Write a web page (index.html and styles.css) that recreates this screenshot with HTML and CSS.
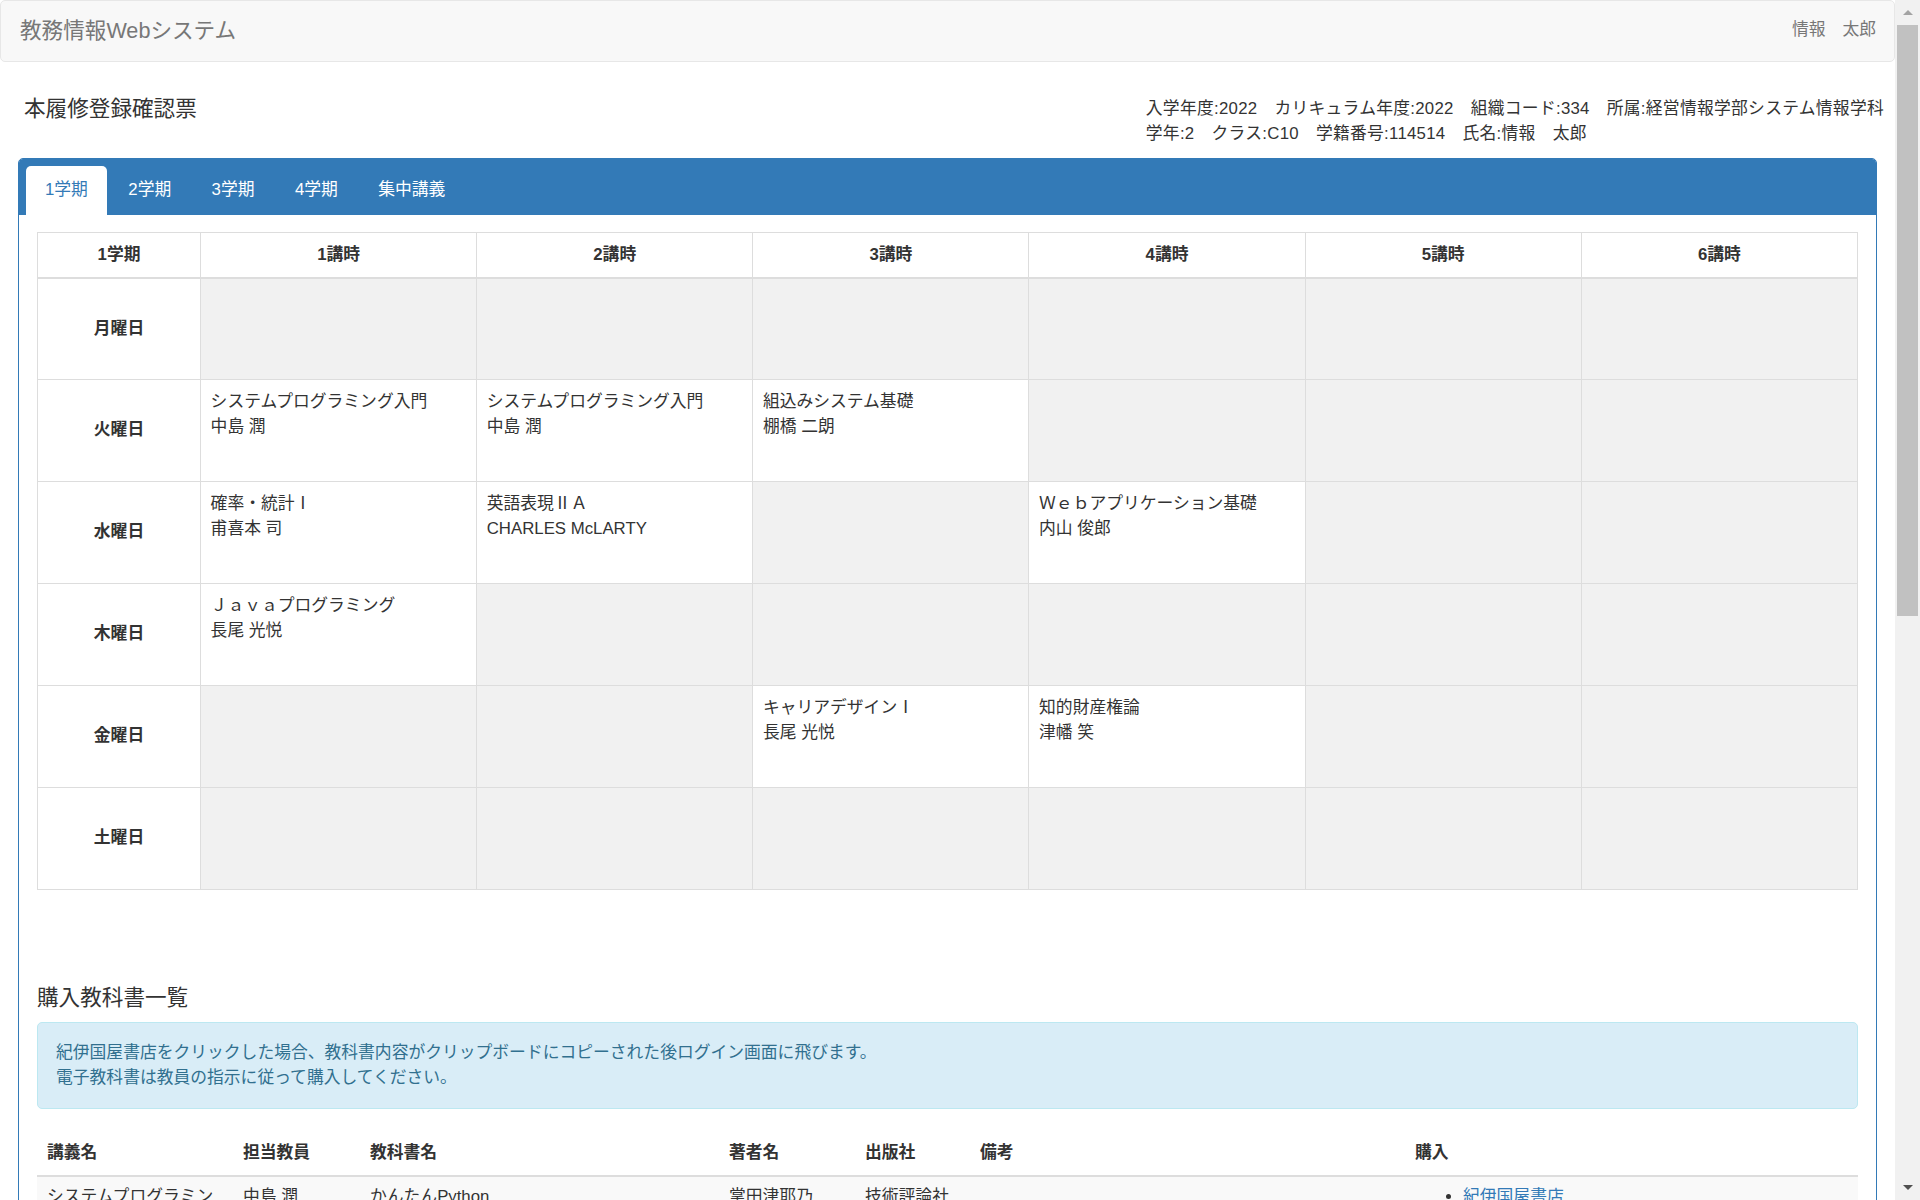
FILE: index.html
```html
<!DOCTYPE html>
<html lang="ja">
<head>
<meta charset="utf-8">
<title>教務情報Webシステム</title>
<link rel="stylesheet" href="styles.css">
</head>
<body>
<div class="window">
  <div class="viewport">
    <nav class="navbar">
      <span class="brand">教務情報Webシステム</span>
      <span class="user">情報　太郎</span>
    </nav>
    <div class="container">
      <div class="page-head">
        <h4 class="page-title">本履修登録確認票</h4>
        <div class="student-info">
          <div>入学年度:2022　カリキュラム年度:2022　組織コード:334　所属:経営情報学部システム情報学科</div>
          <div>学年:2　クラス:C10　学籍番号:114514　氏名:情報　太郎</div>
        </div>
      </div>

      <div class="panel">
        <div class="panel-heading">
          <ul class="tabs">
            <li class="tab active">1学期</li>
            <li class="tab">2学期</li>
            <li class="tab">3学期</li>
            <li class="tab">4学期</li>
            <li class="tab">集中講義</li>
          </ul>
        </div>
        <div class="panel-body">
          <table class="timetable">
            <colgroup>
              <col class="col-day">
              <col><col><col><col><col><col>
            </colgroup>
            <thead>
              <tr>
                <th>1学期</th><th>1講時</th><th>2講時</th><th>3講時</th><th>4講時</th><th>5講時</th><th>6講時</th>
              </tr>
            </thead>
            <tbody>
              <tr>
                <th class="day">月曜日</th>
                <td class="empty"></td><td class="empty"></td><td class="empty"></td><td class="empty"></td><td class="empty"></td><td class="empty"></td>
              </tr>
              <tr>
                <th class="day">火曜日</th>
                <td>システムプログラミング入門<br>中島 潤</td>
                <td>システムプログラミング入門<br>中島 潤</td>
                <td>組込みシステム基礎<br>棚橋 二朗</td>
                <td class="empty"></td><td class="empty"></td><td class="empty"></td>
              </tr>
              <tr>
                <th class="day">水曜日</th>
                <td>確率・統計Ⅰ<br>甫喜本 司</td>
                <td>英語表現ⅡＡ<br>CHARLES McLARTY</td>
                <td class="empty"></td>
                <td>Ｗｅｂアプリケーション基礎<br>内山 俊郎</td>
                <td class="empty"></td><td class="empty"></td>
              </tr>
              <tr>
                <th class="day">木曜日</th>
                <td>Ｊａｖａプログラミング<br>長尾 光悦</td>
                <td class="empty"></td><td class="empty"></td><td class="empty"></td><td class="empty"></td><td class="empty"></td>
              </tr>
              <tr>
                <th class="day">金曜日</th>
                <td class="empty"></td><td class="empty"></td>
                <td>キャリアデザインⅠ<br>長尾 光悦</td>
                <td>知的財産権論<br>津幡 笑</td>
                <td class="empty"></td><td class="empty"></td>
              </tr>
              <tr>
                <th class="day">土曜日</th>
                <td class="empty"></td><td class="empty"></td><td class="empty"></td><td class="empty"></td><td class="empty"></td><td class="empty"></td>
              </tr>
            </tbody>
          </table>

          <h4 class="section-title">購入教科書一覧</h4>
          <div class="alert">
            紀伊国屋書店をクリックした場合、教科書内容がクリップボードにコピーされた後ログイン画面に飛びます。<br>
            電子教科書は教員の指示に従って購入してください。
          </div>

          <table class="books">
            <colgroup>
              <col class="b1"><col class="b2"><col class="b3"><col class="b4"><col class="b5"><col class="b6"><col class="b7">
            </colgroup>
            <thead>
              <tr>
                <th>講義名</th><th>担当教員</th><th>教科書名</th><th>著者名</th><th>出版社</th><th>備考</th><th>購入</th>
              </tr>
            </thead>
            <tbody>
              <tr>
                <td>システムプログラミング入門</td><td>中島 潤</td><td>かんたんPython</td><td>掌田津耶乃</td><td>技術評論社</td><td></td>
                <td><ul class="shop"><li><a href="#">紀伊国屋書店</a></li></ul></td>
              </tr>
              <tr>
                <td>組込みシステム基礎</td><td>棚橋 二朗</td><td>組込みシステムの基礎</td><td>宇田川佳久</td><td>オーム社</td><td></td>
                <td><ul class="shop"><li><a href="#">紀伊国屋書店</a></li></ul></td>
              </tr>
              <tr>
                <td>確率・統計Ⅰ</td><td>甫喜本 司</td><td>確率統計入門</td><td>小寺平治</td><td>共立出版</td><td></td>
                <td><ul class="shop"><li><a href="#">紀伊国屋書店</a></li></ul></td>
              </tr>
            </tbody>
          </table>
        </div>
      </div>
    </div>
  </div>
  <div class="scrollbar">
    <div class="sb-btn"><span class="arrow-up"></span></div>
    <div class="sb-track"><div class="sb-thumb"></div></div>
    <div class="sb-btn"><span class="arrow-down"></span></div>
  </div>
</div>
</body>
</html>
```

FILE: styles.css
```css
html, body {
  margin: 0;
  padding: 0;
  height: 100%;
  overflow: hidden;
}

body {
  font-family: "Liberation Sans", "Noto Sans CJK JP", sans-serif;
  font-size: 16.8px;
  line-height: 24.5px;
  color: #333;
  background: #fff;
}

.window {
  display: flex;
  height: 100vh;
  overflow: hidden;
}

.viewport {
  flex: 1;
  min-width: 0;
  overflow: hidden;
}

/* navbar */
.navbar {
  box-sizing: border-box;
  height: 62px;
  display: flex;
  align-items: center;
  justify-content: space-between;
  padding: 0 18px;
  background: #f8f8f8;
  border: 1px solid #e7e7e7;
  border-radius: 5px;
  color: #777;
}

.brand {
  font-size: 21.6px;
  line-height: 25px;
  color: #777;
  margin-left: 1px;
  margin-top: -1px;
}

.user {
  font-size: 16.8px;
  color: #777;
  margin-top: -2px;
}

/* container */
.container {
  padding: 0 18px;
}

.page-head {
  display: flex;
  justify-content: space-between;
  align-items: flex-start;
  margin-top: 34px;
}

.page-title {
  margin: 0;
  padding-left: 6px;
  font-size: 21.6px;
  font-weight: normal;
  line-height: 25px;
  color: #333;
}

.student-info {
  margin-right: -7px;
  padding-top: 1px;
  line-height: 24.5px;
  letter-spacing: 0.27px;
}

/* panel */
.panel {
  margin-top: 12px;
  border: 1px solid #337ab7;
  border-radius: 5px;
  background: #fff;
}

.panel-heading {
  background: #337ab7;
  padding: 6.5px 7px 0;
  border-radius: 4px 4px 0 0;
}

.tabs {
  list-style: none;
  margin: 0;
  padding: 0;
  display: flex;
  gap: 2.4px;
}

.tab {
  padding: 11px 19px 13px;
  line-height: 25px;
  color: #fff;
  border-radius: 5px 5px 0 0;
}

.tab.active {
  background: #fff;
  color: #337ab7;
}

.panel-body {
  padding: 17.5px 18px;
}

/* timetable */
.timetable {
  width: 100%;
  table-layout: fixed;
  border-collapse: collapse;
}

.timetable .col-day {
  width: 163px;
}

.timetable th,
.timetable td {
  border: 1px solid #ddd;
  padding: 9.6px;
  line-height: 24.5px;
}

.timetable thead th {
  text-align: center;
  font-weight: bold;
  padding: 9.5px 9.6px 9.5px;
  border-bottom: 2.5px solid #ddd;
}

.timetable tbody tr {
  height: 102px;
}

.timetable td {
  vertical-align: top;
  background: #fff;
  padding-top: 10px;
}

.timetable td.empty {
  background: #f1f1f1;
}

.timetable th.day {
  text-align: center;
  vertical-align: middle;
  font-weight: bold;
  background: #fff;
}

/* books section */
.section-title {
  margin: 95px 0 11.5px;
  font-size: 21.6px;
  font-weight: normal;
  line-height: 25px;
  color: #333;
}

.alert {
  padding: 17px 18px 18px;
  border: 1px solid #bce8f1;
  border-radius: 5px;
  background: #d9edf7;
  color: #31708f;
  line-height: 25px;
}

.books {
  width: 100%;
  margin-top: 24px;
  table-layout: fixed;
  border-collapse: collapse;
}

.books .b1 { width: 196px; }
.books .b2 { width: 127px; }
.books .b3 { width: 359px; }
.books .b4 { width: 136px; }
.books .b5 { width: 115px; }
.books .b6 { width: 435px; }
.books .b7 { width: 453px; }

.books th,
.books td {
  padding: 8px 10px;
  text-align: left;
  vertical-align: top;
  line-height: 24.5px;
  border-top: 1px solid #ddd;
}

.books thead th {
  border-top: 0;
  border-bottom: 2.5px solid #ddd;
  font-weight: bold;
  padding: 8px 10px 10px;
}

.books tbody tr:nth-child(odd) td {
  background: #f9f9f9;
}

.books tbody tr:first-child td {
  border-top: 0;
}

.shop {
  margin: 0;
  padding-left: 48px;
}

.shop a {
  color: #337ab7;
  text-decoration: none;
}

/* scrollbar */
.scrollbar {
  flex: none;
  width: 25px;
  height: 100vh;
  display: flex;
  flex-direction: column;
  background: #f1f1f1;
}

.sb-btn {
  height: 25px;
  flex: none;
  display: flex;
  align-items: center;
  justify-content: center;
}

.arrow-up {
  width: 0;
  height: 0;
  border-left: 5px solid transparent;
  border-right: 5px solid transparent;
  border-bottom: 5px solid #a3a3a3;
}

.arrow-down {
  width: 0;
  height: 0;
  border-left: 5px solid transparent;
  border-right: 5px solid transparent;
  border-top: 5px solid #505050;
}

.sb-track {
  flex: 1;
  padding: 0 2px;
}

.sb-thumb {
  height: 591px;
  background: #c1c1c1;
}
```
